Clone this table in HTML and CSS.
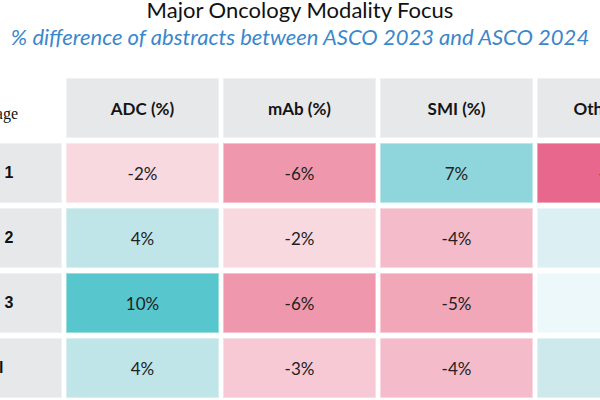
FILE: index.html
```html
<!DOCTYPE html>
<html lang="en">
<head>
<meta charset="utf-8">
<title>Major Oncology Modality Focus</title>
<link rel="stylesheet" href="styles.css">
</head>
<body>
<div class="page">
  <h1 class="title">Major Oncology Modality Focus</h1>
  <p class="subtitle">% difference of abstracts between ASCO 2023 and ASCO 2024</p>
  <div class="table-wrap">
    <div class="table">
      <div class="corner">Stage</div>
      <div class="cell head">ADC (%)</div>
      <div class="cell head">mAb (%)</div>
      <div class="cell head">SMI (%)</div>
      <div class="cell head">Others (%)</div>

      <div class="cell label">Stage 1</div>
      <div class="cell n2">-2%</div>
      <div class="cell n6">-6%</div>
      <div class="cell p7">7%</div>
      <div class="cell n9">-9%</div>

      <div class="cell label">Stage 2</div>
      <div class="cell p4">4%</div>
      <div class="cell n2">-2%</div>
      <div class="cell n4">-4%</div>
      <div class="cell p2">2%</div>

      <div class="cell label">Stage 3</div>
      <div class="cell p10">10%</div>
      <div class="cell n6">-6%</div>
      <div class="cell n5">-5%</div>
      <div class="cell p1">1%</div>

      <div class="cell label">Total</div>
      <div class="cell p4">4%</div>
      <div class="cell n3">-3%</div>
      <div class="cell n4">-4%</div>
      <div class="cell p3">3%</div>
    </div>
  </div>
</div>
</body>
</html>
```
FILE: styles.css
```css
html, body {
  margin: 0;
  padding: 0;
  background: #ffffff;
}
body {
  width: 600px;
  height: 400px;
  overflow: hidden;
  font-family: "Lato", "Open Sans", sans-serif;
  color: #222222;
}
.page {
  width: 600px;
  overflow: hidden;
}
.title {
  margin: -1px 0 0;
  font-size: 22px;
  font-weight: 400;
  line-height: 22px;
  text-align: center;
  color: #111111;
}
.subtitle {
  margin: 3px 0 0;
  font-size: 22px;
  font-style: italic;
  line-height: 26px;
  text-align: center;
  color: #3b87cc;
  white-space: nowrap;
}
.table-wrap {
  margin-top: 28px;
  width: 600px;
  overflow: hidden;
}
.table {
  display: grid;
  grid-template-columns: 154px repeat(4, 153px);
  grid-auto-rows: 60px;
  column-gap: 4px;
  row-gap: 5px;
  margin-left: -92px;
  width: max-content;
}
.corner {
  display: flex;
  align-items: center;
  justify-content: flex-end;
  padding: 11px 44px 0 0;
  font-family: "Liberation Serif", serif;
  font-size: 16px;
  color: #111111;
}
.cell {
  box-sizing: border-box;
  display: flex;
  align-items: center;
  justify-content: center;
  border: 1px solid rgba(255, 255, 255, 0.4);
  font-size: 17px;
  white-space: nowrap;
}
.head {
  background: #e7e8ea;
  font-weight: 700;
  color: #151515;
}
.label {
  background: #e7e8ea;
  font-family: "Liberation Sans", Arial, sans-serif;
  font-weight: 700;
  font-size: 16px;
  color: #111111;
}
.n2 { background: #f9d9e0; }
.n3 { background: #f7c9d4; }
.n4 { background: #f4bccb; }
.n5 { background: #f2a7b9; }
.n6 { background: #ef98ad; }
.n9 { background: #e8678d; }
.p1 { background: #ecf8f9; }
.p2 { background: #dcf0f4; }
.p3 { background: #cde9ec; }
.p4 { background: #bfe5e8; }
.p7 { background: #8fd5dc; }
.p10 { background: #57c6cd; }
```
